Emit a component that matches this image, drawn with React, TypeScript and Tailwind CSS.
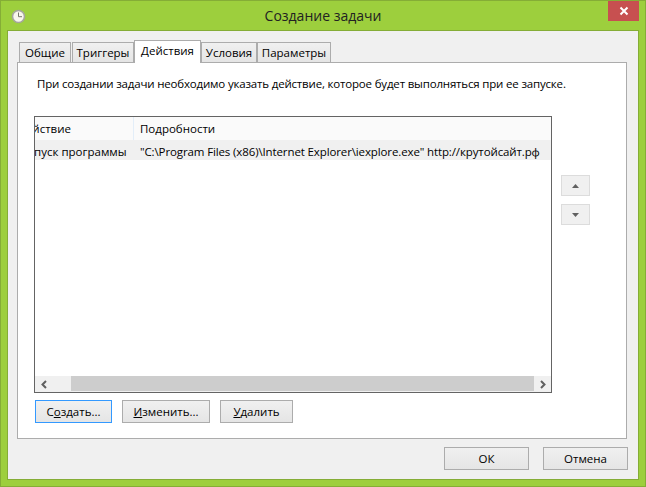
const font = { fontFamily: '"Open Sans", "Noto Sans", sans-serif' };

function Tab({ label, active, className }: { label: string; active?: boolean; className: string }) {
  return (
    <div
      className={
        active
          ? `relative z-10 -mb-px -mt-[2px] h-[23px] border border-b-0 border-[#acacac] bg-white text-center leading-[20px] ${className}`
          : `h-[20px] border border-b-0 border-[#acacac] bg-gradient-to-b from-[#f0f0f0] to-[#e5e5e5] text-center leading-[19px] ${className}`
      }
    >
      {label}
    </div>
  );
}

function Btn({ children, focused, className }: { children: React.ReactNode; focused?: boolean; className: string }) {
  return (
    <button
      className={`h-[23px] border bg-gradient-to-b from-[#f0f0f0] to-[#e5e5e5] pt-px text-[11.5px] leading-[20px] text-black ${
        focused ? "border-[#3399ff]" : "border-[#acacac]"
      } ${className}`}
    >
      {children}
    </button>
  );
}

export default function App() {
  return (
    <div style={font} className="flex h-[487px] w-[646px] flex-col overflow-hidden border border-[#85ad36] bg-[#9dcf3d] text-[11.5px] text-black">
      {/* заголовок */}
      <div className="flex h-[29px] shrink-0 items-start">
        <svg width="15" height="15" viewBox="0 0 15 15" className="ml-[10px] mt-[8px] shrink-0">
          <circle cx="7.5" cy="7.5" r="6" fill="#f8f6ee" stroke="#a5a59d" strokeWidth="1.6" />
          <path d="M7.5 3.5v4.2H11" fill="none" stroke="#77776c" strokeWidth="1" />
        </svg>
        <div className="flex-1 pl-[12px] pt-[4px] text-center text-[14px] leading-[22px] text-[#222]">Создание задачи</div>
        <div className="mr-[6px] flex h-[20px] w-[31px] items-center justify-center bg-[#c75050]">
          <svg width="10" height="10" viewBox="0 0 10 10">
            <path d="M1.5 1.5l7 7M8.5 1.5l-7 7" stroke="#fff" strokeWidth="2" />
          </svg>
        </div>
      </div>

      <div className="mx-[6px] mb-[6px] flex flex-1 flex-col border border-[#85ad36] bg-[#f0f0f0]">
        <div className="ml-[9px] mr-[11px] mt-[11px] flex h-[20px] items-start pl-[2px]">
          <Tab label="Общие" className="w-[52px]" />
          <Tab label="Триггеры" className="ml-px w-[62px]" />
          <Tab label="Действия" active className="w-[67px]" />
          <Tab label="Условия" className="w-[56px]" />
          <Tab label="Параметры" className="w-[74px]" />
        </div>

        {/* панель */}
        <div className="ml-[9px] mr-[11px] flex h-[377px] flex-col border border-[#acacac] bg-white pl-[16px]">
          <div className="ml-[3px] mt-[12px] h-[18px] whitespace-nowrap leading-[18px] tracking-[-0.18px]">
            При создании задачи необходимо указать действие, которое будет выполняться при ее запуске.
          </div>

          <div className="mt-[23px] flex items-start">
            <div className="flex h-[277px] w-[518px] shrink-0 flex-col overflow-hidden border border-[#646464]">
              <div className="flex h-[23px] shrink-0 bg-[#fafafa] pt-[1px] leading-[22px]">
                <div className="-mt-[1px] w-[99px] shrink-0 overflow-hidden border-r border-[#e3eef9] pt-[1px]">
                  <div className="-ml-[19px] w-[120px] whitespace-nowrap pl-[2px]">Действие</div>
                </div>
                <div className="pl-[6px]">Подробности</div>
              </div>
              <div className="flex h-[20px] shrink-0 bg-[#f0f0f0] pt-[2px] leading-[20px]">
                <div className="w-[99px] shrink-0 overflow-hidden">
                  <div className="-ml-[14px] w-[130px] whitespace-nowrap">Запуск программы</div>
                </div>
                <div className="whitespace-nowrap pl-[6px] tracking-[-0.12px]">
                  "C:\Program Files (x86)\Internet Explorer\iexplore.exe" http://крутойсайт.рф
                </div>
              </div>
              <div className="flex-1" />
              {/* скролл */}
              <div className="flex h-[16px] shrink-0 bg-[#f0f0f0]">
                <div className="flex w-[17px] items-center justify-center">
                  <svg width="8" height="9" viewBox="0 0 8 9">
                    <path d="M6 1L2.5 4.5 6 8" fill="none" stroke="#606060" strokeWidth="2" />
                  </svg>
                </div>
                <div className="ml-[19px] h-[15px] w-[463px] bg-[#cdcdcd]" />
                <div className="flex w-[17px] items-center justify-center">
                  <svg width="8" height="9" viewBox="0 0 8 9">
                    <path d="M2 1l3.5 3.5L2 8" fill="none" stroke="#606060" strokeWidth="2" />
                  </svg>
                </div>
              </div>
            </div>

            <div className="ml-[9px] mt-[59px] flex flex-col gap-[8px]">
              <div className="flex h-[21px] w-[29px] items-center justify-center border border-[#dcdcdc] bg-[#f0f0f0]">
                <svg width="7" height="4" viewBox="0 0 7 4"><path d="M3.5 0L7 4H0z" fill="#606060" /></svg>
              </div>
              <div className="flex h-[21px] w-[29px] items-center justify-center border border-[#dcdcdc] bg-[#f0f0f0]">
                <svg width="7" height="4" viewBox="0 0 7 4"><path d="M0 0h7L3.5 4z" fill="#606060" /></svg>
              </div>
            </div>
          </div>

          <div className="mt-[7px] flex">
            <Btn focused className="ml-px w-[77px]">
              С<u>о</u>здать...
            </Btn>
            <Btn className="ml-[10px] w-[88px]">
              <u>И</u>зменить...
            </Btn>
            <Btn className="ml-[10px] w-[73px]">
              <u>У</u>далить
            </Btn>
          </div>
        </div>

        <div className="mr-[10px] mt-[8px] flex justify-end gap-[14px]">
          <Btn className="w-[85px]">ОК</Btn>
          <Btn className="w-[85px]">Отмена</Btn>
        </div>
      </div>
    </div>
  );
}
